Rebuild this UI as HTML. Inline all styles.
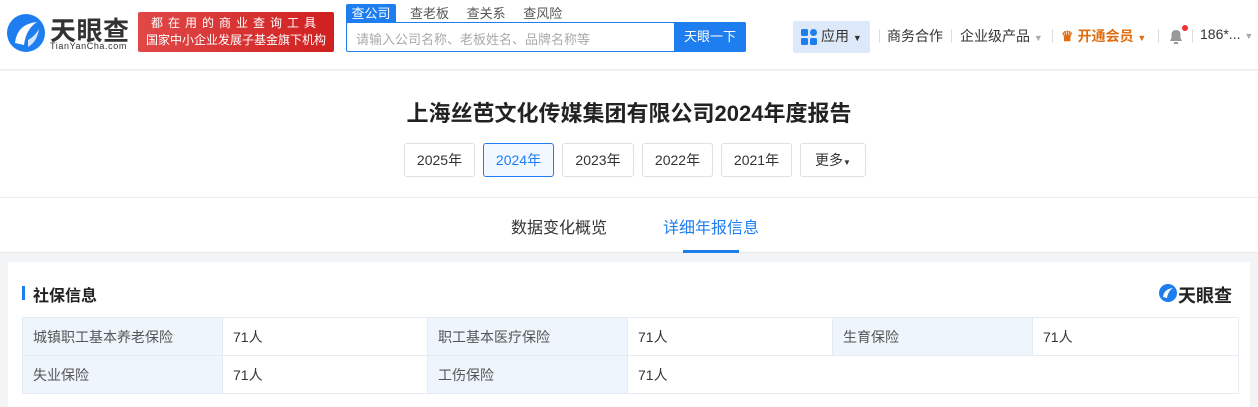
<!DOCTYPE html>
<html><head><meta charset="utf-8"><style>
*{margin:0;padding:0;box-sizing:border-box}
body{width:1258px;height:401px;overflow:hidden;background:#f3f4f6;font-family:"Liberation Sans","Noto Sans CJK SC",sans-serif;color:#333;position:relative}
.a{position:absolute}
.hdr{left:0;top:0;width:1258px;height:70px;background:#fff;border-bottom:1px solid #eee}
.top{left:0;top:71px;width:1258px;height:182px;background:#fff;border-bottom:1px solid #e8e8e8}
.yb{top:143px;height:34px;border:1px solid #e0e0e0;border-radius:3px;font-size:14px;line-height:32px;text-align:center;background:#fff;color:#333}
.card{left:8px;top:262px;width:1242px;height:145px;background:#fff}
table{position:absolute;left:22px;top:317px;border-collapse:collapse;font-size:14px}
td{border:1px solid #e4ebf2;height:38px;padding-left:10px;color:#333}
td.l{background:#eef5fc;color:#555}
.nav{top:26px;font-size:14px;color:#333}
.sep{top:29px;width:1px;height:14px;background:#ddd}
</style></head><body>
<div class="a hdr"></div>
<svg class="a" style="left:6px;top:13px" width="40" height="40" viewBox="0 0 40 40"><circle cx="20" cy="20" r="19" fill="#1e7ef0"/><path d="M9 30 Q11 11 31 9 Q20 16 18 32 Z" fill="#fff"/><path d="M22 27 Q29 23 33 16 Q31 29 22 34 Z" fill="#fff" opacity=".8"/></svg>
<div class="a" style="left:50px;top:11px;font-size:26px;font-weight:bold;color:#333;letter-spacing:.5px">天眼查</div>
<div class="a" style="left:50px;top:41px;font-size:9px;color:#333;letter-spacing:.6px">TianYanCha.com</div>
<div class="a" style="left:138px;top:12px;width:196px;height:40px;background:linear-gradient(90deg,#e04848,#d02020);border-radius:2px;color:#fff;font-size:12px;line-height:17px;text-align:center;padding-top:3px"><div style="letter-spacing:5px">都在用的商业查询工具</div><div>国家中小企业发展子基金旗下机构</div></div>
<div class="a" style="left:346px;top:4px;width:50px;height:19px;background:#1e7ef0;color:#fff;font-size:13px;text-align:center;line-height:19px;border-radius:2px 2px 0 0">查公司</div>
<div class="a" style="left:410px;top:4px;font-size:13px;color:#555;line-height:19px;word-spacing:14px">查老板 查关系 查风险</div>
<div class="a" style="left:346px;top:22px;width:400px;height:30px;border:1px solid #1e7ef0;border-radius:2px;background:#fff"></div>
<div class="a" style="left:356px;top:29px;font-size:13px;color:#aaa">请输入公司名称、老板姓名、品牌名称等</div>
<div class="a" style="left:674px;top:22px;width:72px;height:30px;background:#1e7ef0;color:#fff;font-size:13px;line-height:30px;text-align:center;border-radius:0 2px 2px 0">天眼一下</div>
<div class="a" style="left:793px;top:21px;width:77px;height:32px;background:#dde9f8;border-radius:2px"></div>
<svg class="a" style="left:801px;top:29px" width="16" height="16"><rect x="0" y="0" width="7" height="7" rx="1.5" fill="#1e7ef0"/><rect x="9" y="0" width="7" height="7" rx="3.5" fill="#1e7ef0"/><rect x="0" y="9" width="7" height="7" rx="1.5" fill="#1e7ef0"/><rect x="9" y="9" width="7" height="7" rx="1.5" fill="#1e7ef0"/></svg>
<div class="a nav" style="left:821px">应用 <span style="font-size:9px">▼</span></div>
<div class="a sep" style="left:879px"></div>
<div class="a nav" style="left:887px">商务合作</div>
<div class="a sep" style="left:951px"></div>
<div class="a nav" style="left:960px">企业级产品 <span style="font-size:9px;color:#aaa">▼</span></div>
<div class="a sep" style="left:1052px"></div>
<div class="a nav" style="left:1061px;color:#e06d10;font-weight:bold">♛ 开通会员 <span style="font-size:9px">▼</span></div>
<div class="a sep" style="left:1158px"></div>
<svg class="a" style="left:1167px;top:27px" width="18" height="18"><path d="M3 14 L15 14 L13.5 11 L13.5 7 Q13 3 9 3 Q5 3 4.5 7 L4.5 11 Z" fill="#999"/><rect x="7" y="15" width="4" height="2" fill="#999"/></svg>
<div class="a" style="left:1182px;top:25px;width:6px;height:6px;border-radius:50%;background:#f03030"></div>
<div class="a sep" style="left:1192px"></div>
<div class="a nav" style="left:1200px">186*... <span style="font-size:9px;color:#aaa">▼</span></div>

<div class="a top"></div>
<div class="a" style="left:0;top:197px;width:1258px;height:1px;background:#ececec"></div>
<div class="a" style="left:0;top:96px;width:1258px;text-align:center;font-size:22px;font-weight:bold;color:#222">上海丝芭文化传媒集团有限公司2024年度报告</div>
<div class="a yb" style="left:404px;width:71px">2025年</div>
<div class="a yb" style="left:483px;width:71px;border-color:#1e7ef0;color:#1e7ef0;background:#f2f8ff">2024年</div>
<div class="a yb" style="left:562px;width:72px">2023年</div>
<div class="a yb" style="left:642px;width:71px">2022年</div>
<div class="a yb" style="left:721px;width:71px">2021年</div>
<div class="a yb" style="left:800px;width:66px">更多<span style="font-size:8px">▼</span></div>
<div class="a" style="left:511px;top:214px;font-size:16px;color:#333">数据变化概览</div>
<div class="a" style="left:663px;top:214px;font-size:16px;color:#1e7ef0">详细年报信息</div>
<div class="a" style="left:683px;top:250px;width:56px;height:3px;background:#1e7ef0"></div>

<div class="a card"></div>
<div class="a" style="left:22px;top:286px;width:3px;height:14px;background:#1e7ef0"></div>
<div class="a" style="left:33px;top:282px;font-size:16px;font-weight:bold;color:#222">社保信息</div>
<svg class="a" style="left:1158px;top:283px" width="20" height="20" viewBox="0 0 40 40"><circle cx="20" cy="20" r="18" fill="#1e7ef0"/><path d="M10 28 Q12 12 30 10 Q20 16 18 30 Z" fill="#fff"/></svg>
<div class="a" style="left:1178px;top:282px;font-size:18px;font-weight:bold;color:#222">天眼查</div>
<table>
<tr><td class="l" style="width:200px">城镇职工基本养老保险</td><td style="width:205px">71人</td><td class="l" style="width:200px">职工基本医疗保险</td><td style="width:205px">71人</td><td class="l" style="width:200px">生育保险</td><td style="width:206px">71人</td></tr>
<tr><td class="l">失业保险</td><td>71人</td><td class="l">工伤保险</td><td colspan="3">71人</td></tr>
</table>
</body></html>
